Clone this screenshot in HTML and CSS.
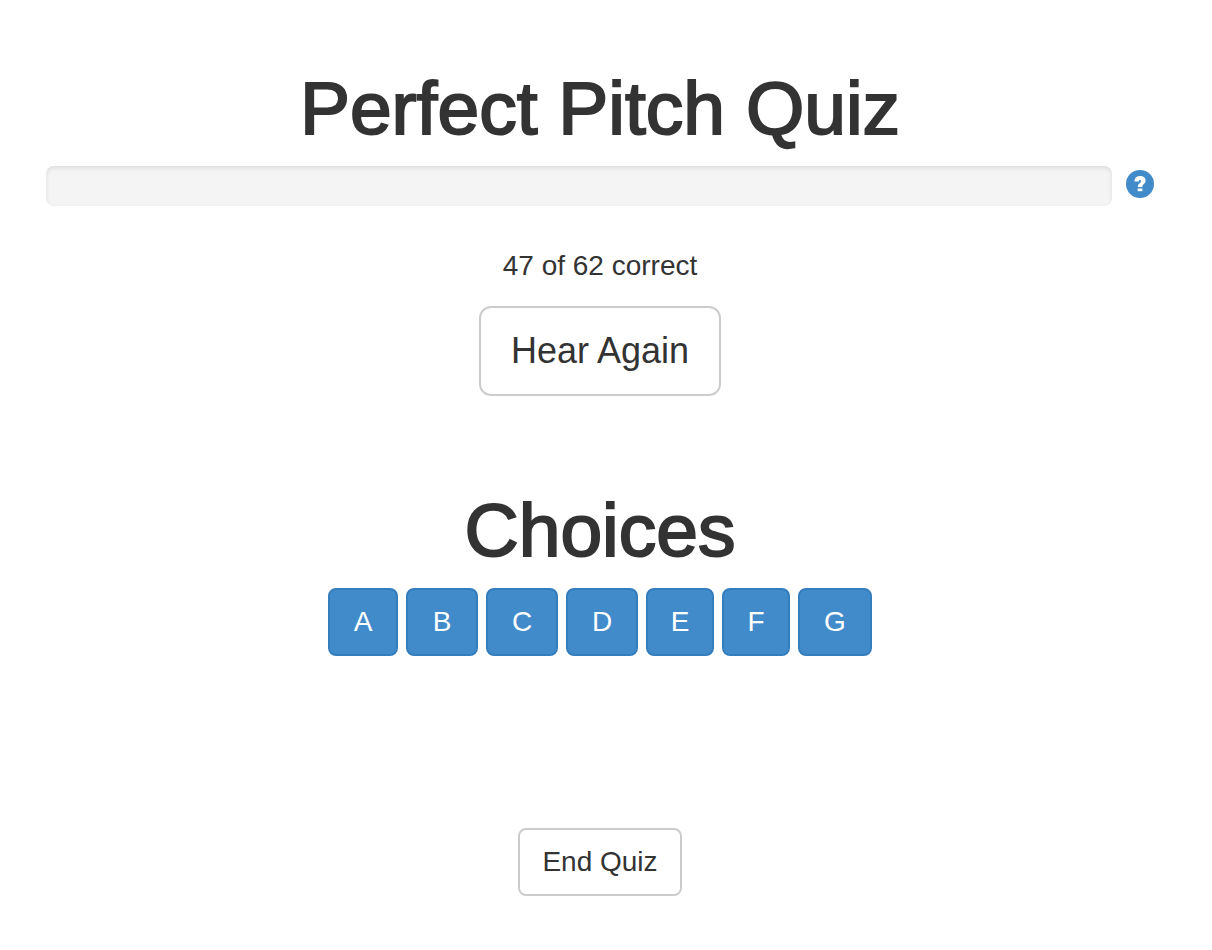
FILE: index.html
```html
<!DOCTYPE html>
<html lang="en">
<head>
  <meta charset="UTF-8">
  <meta name="viewport" content="width=device-width, initial-scale=1">
  <title>Perfect Pitch Quiz</title>
  <link rel="stylesheet" href="styles.css">
</head>
<body>
  <main class="quiz">
    <h1>Perfect Pitch Quiz</h1>

    <div class="progress-row">
      <div class="progress" role="progressbar" aria-label="Quiz progress" aria-valuemin="0" aria-valuemax="100" aria-valuenow="0"></div>
      <a class="help" href="#" aria-label="Help">
        <svg width="28" height="28" viewBox="0 0 28 28" aria-hidden="true">
          <circle cx="14" cy="14" r="14" fill="#428bca"/>
          <path d="M8.4 11.6C8.6 7.9 10.6 6.1 14.2 6.1C17.6 6.1 19.6 7.8 19.6 10.6C19.6 14.1 16.3 14 16.3 17H11.8C11.8 13.2 15 13.3 15 11.2C15 10.3 14.6 9.9 13.9 9.9C13.1 9.9 12.7 10.5 12.7 11.6Z" fill="#fff"/>
          <rect x="11.7" y="18.5" width="4.7" height="2.7" fill="#fff"/>
        </svg>
      </a>
    </div>

    <p class="score">47 of 62 correct</p>
    <button type="button" class="btn btn-lg">Hear Again</button>

    <h1 class="choices-title">Choices</h1>
    <div class="choices">
      <button type="button" class="btn btn-primary">A</button>
      <button type="button" class="btn btn-primary">B</button>
      <button type="button" class="btn btn-primary">C</button>
      <button type="button" class="btn btn-primary">D</button>
      <button type="button" class="btn btn-primary">E</button>
      <button type="button" class="btn btn-primary">F</button>
      <button type="button" class="btn btn-primary">G</button>
    </div>

    <button type="button" class="btn btn-end">End Quiz</button>
  </main>
</body>
</html>
```

FILE: styles.css
```css
* {
  box-sizing: border-box;
}

body {
  margin: 0;
  background: #fff;
  color: #333;
  font-family: "Liberation Sans", Arial, sans-serif;
  font-size: 28px;
  line-height: 40px;
}

.quiz {
  display: flex;
  flex-direction: column;
  align-items: center;
  padding: 68px 58px 40px 46px;
}

/* medium weight look */
h1 {
  margin: 0 0 18px;
  font-size: 75px;
  font-weight: 400;
  line-height: 80px;
  -webkit-text-stroke: 2px #333;
}

.progress-row {
  display: flex;
  gap: 14px;
  width: 100%;
}

.progress {
  flex: 1;
  height: 40px;
  border-radius: 8px;
  background: #f4f4f4;
  box-shadow: inset 0 2px 4px rgba(0, 0, 0, 0.1);
}

.help {
  padding-top: 4px;
}

.help svg {
  display: block;
}

.score {
  margin: 40px 0 20px;
}

.btn {
  padding: 12px 22px;
  border: 2px solid #ccc;
  border-radius: 8px;
  background: #fff;
  color: #333;
  font-family: inherit;
  font-size: 28px;
  line-height: 40px;
  cursor: pointer;
}

.btn-lg {
  padding: 20px 30px;
  border-radius: 12px;
  font-size: 36px;
  line-height: 46px;
}

.choices-title {
  margin-top: 94px;
}

.choices {
  display: grid;
  grid-template-columns: 70px 72px 72px 72px 68px 68px 74px;
  gap: 8px;
}

.btn-primary {
  padding: 12px 0;
  border-color: #357ebd;
  background: #428bca;
  color: #fff;
}

.btn-end {
  margin-top: 172px;
}
```
